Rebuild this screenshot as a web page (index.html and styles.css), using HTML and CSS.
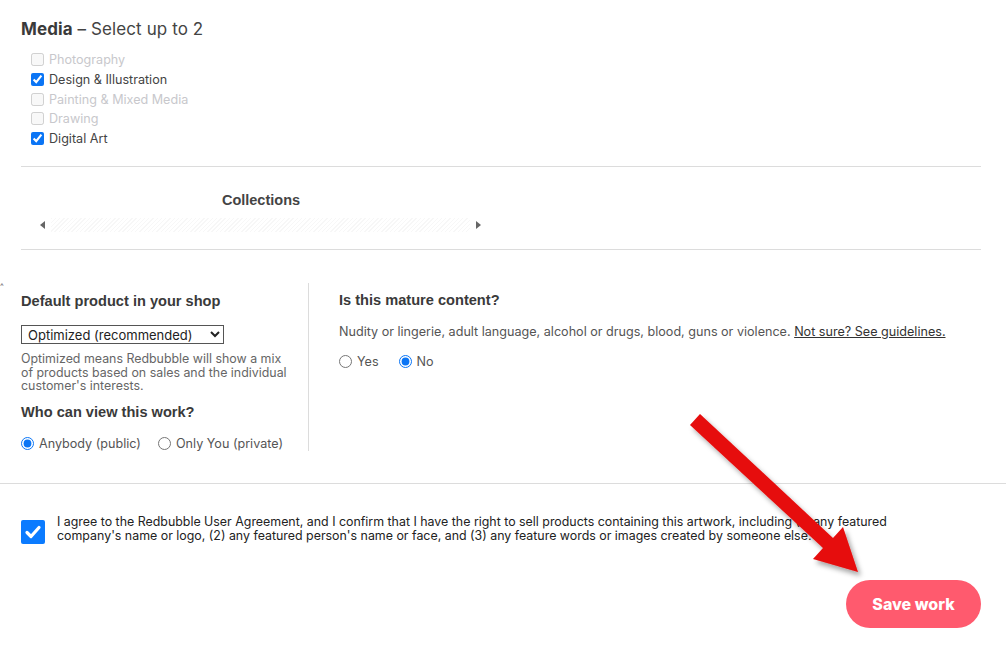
FILE: index.html
```html
<!DOCTYPE html>
<html>
<head>
<meta charset="utf-8">
<link rel="stylesheet" href="styles.css">
</head>
<body>
<div class="page">
  <div class="wrap">
    <section class="media">
      <h2 class="media-title"><b>Media</b> – Select up to 2</h2>
      <ul class="checks">
        <li class="off"><input type="checkbox" disabled><span>Photography</span></li>
        <li><input type="checkbox" checked><span>Design &amp; Illustration</span></li>
        <li class="off"><input type="checkbox" disabled><span>Painting &amp; Mixed Media</span></li>
        <li class="off"><input type="checkbox" disabled><span>Drawing</span></li>
        <li><input type="checkbox" checked><span>Digital Art</span></li>
      </ul>
    </section>
    <section class="collections">
      <h3 class="coll-title">Collections</h3>
      <div class="slider">
        <span class="tri left"></span>
        <span class="track"></span>
        <span class="tri right"></span>
      </div>
    </section>
    <section class="settings">
      <div class="col left-col">
        <h3 class="label">Default product in your shop</h3>
        <select class="sel"><option>Optimized (recommended)</option></select>
        <p class="hint">Optimized means Redbubble will show a mix of products based on sales and the individual customer's interests.</p>
        <h3 class="label who">Who can view this work?</h3>
        <div class="radios">
          <label><input type="radio" name="v" checked>Anybody (public)</label>
          <label><input type="radio" name="v">Only You (private)</label>
        </div>
      </div>
      <div class="col right-col">
        <h3 class="label">Is this mature content?</h3>
        <p class="desc">Nudity or lingerie, adult language, alcohol or drugs, blood, guns or violence. <a href="#">Not sure? See guidelines.</a></p>
        <div class="radios yn">
          <label><input type="radio" name="m">Yes</label>
          <label><input type="radio" name="m" checked>No</label>
        </div>
      </div>
    </section>
  </div>
  <hr class="full">
  <div class="wrap agree">
    <span class="bigcheck"><svg width="24" height="24" viewBox="0 0 24 24"><rect width="24" height="24" rx="2" fill="#0b7bff"/><path d="M6 12.5l4 4 8-9" fill="none" stroke="#fff" stroke-width="3.2" stroke-linecap="round" stroke-linejoin="round"/></svg></span>
    <p>I agree to the Redbubble User Agreement, and I confirm that I have the right to sell products containing this artwork, including (1) any featured company's name or logo, (2) any featured person's name or face, and (3) any feature words or images created by someone else.</p>
  </div>
  <div class="wrap actions">
    <button class="save">Save work</button>
  </div>
  <span class="caret">^</span>
  <svg class="arrow" width="1006" height="658" viewBox="0 0 1006 658">
    <defs>
      <filter id="sh" x="-20%" y="-20%" width="140%" height="140%">
        <feDropShadow dx="3" dy="4" stdDeviation="2.5" flood-color="#000" flood-opacity="0.35"/>
      </filter>
    </defs>
    <polygon filter="url(#sh)" fill="#e60a0a" points="700,414 833,538 843,527 858,572 813,559 823,548 690,425"/>
  </svg>
</div>
</body>
</html>
```
FILE: styles.css
```css
* { box-sizing: border-box; }
html, body { margin: 0; padding: 0; background: #fff; }
body { font-family: Inter, "Noto Sans", sans-serif; color: #333; }
.page { position: relative; width: 1006px; height: 658px; overflow: hidden; }
.wrap { padding: 0 25px 0 21px; }
.media { padding-top: 18px; padding-bottom: 18px; border-bottom: 1px solid #dcdcdc; }
.media-title { margin: 0 0 10px; font-size: 17px; font-weight: 400; color: #444; letter-spacing: 0.1px; line-height: 22px; }
.media-title b { font-weight: 700; color: #3a3a3a; }
.checks { list-style: none; margin: 0; padding: 0 0 0 10px; }
.checks li { display: flex; align-items: center; height: 19.7px; font-size: 12.6px; color: #444; }
.checks li.off { color: #c8c8cc; }
.checks input { margin: 0 5px 0 0; width: 13px; height: 13px; accent-color: #0b75f5; }
.collections { height: 83px; border-bottom: 1px solid #dcdcdc; padding-top: 25px; }
.coll-title { margin: 0; font-family: "Liberation Sans", Arial, sans-serif; font-size: 14.5px; font-weight: 700; color: #444; width: 480px; text-align: center; line-height: 17px; }
.slider { display: flex; align-items: center; width: 441px; margin: 9px 0 0 19px; height: 14px; }
.tri { width: 0; height: 0; border-top: 4px solid transparent; border-bottom: 4px solid transparent; }
.tri.left { border-right: 5px solid #666; }
.tri.right { border-left: 5px solid #666; }
.track { flex: 1; height: 14px; margin: 0 6px; background: repeating-linear-gradient(135deg, #f7f7f7 0 1px, #fff 1px 3px); }
.settings { display: flex; padding-top: 33px; height: 233px; }
.left-col { width: 288px; border-right: 1px solid #dcdcdc; height: 168px; padding-right: 20px; padding-top: 9px; }
.right-col { padding-left: 30px; flex: 1; padding-top: 8px; }
.label { margin: 0; font-family: "Liberation Sans", Arial, sans-serif; font-size: 14.6px; font-weight: 700; color: #3a3a3a; line-height: 18px; }
.sel { display: block; margin-top: 15px; width: 203px; height: 19px; font-family: Inter, sans-serif; font-size: 13px; color: #222; border: 1px solid #555; border-radius: 0; background: #fff; padding: 0 2px; }
.hint { margin: 8px 0 0; font-size: 12.4px; line-height: 13.5px; color: #666; }
.who { margin-top: 10px; }
.radios { display: flex; gap: 17px; margin-top: 15px; font-size: 12.6px; color: #555; }
.radios label { display: flex; align-items: center; }
.radios input { margin: 0 5px 0 0; width: 13px; height: 13px; accent-color: #0b75f5; }
.desc { margin: 14px 0 0; font-size: 12.6px; color: #555; line-height: 18px; }
.desc a { color: #333; text-decoration: underline; }
.yn { margin-top: 13px; gap: 20px; }
hr.full { margin: 0; border: 0; border-top: 1px solid #dcdcdc; }
.agree { display: flex; align-items: flex-start; padding-top: 36px; }
.bigcheck { flex: none; width: 24px; height: 24px; margin-right: 12px; }
.bigcheck svg { display: block; }
.agree p { margin: -5px 0 0; max-width: 850px; font-size: 12.4px; line-height: 14px; color: #222; }
.actions { display: flex; justify-content: flex-end; padding-top: 36px; }
.save { width: 135px; height: 48px; border: 0; border-radius: 24px; background: #ff5a6e; color: #fff; font-family: Inter, sans-serif; font-weight: 800; font-size: 16px; }
.caret { position: absolute; left: 0; top: 281px; font-size: 8px; color: #555; }
.arrow { position: absolute; left: 0; top: 0; pointer-events: none; }
```
